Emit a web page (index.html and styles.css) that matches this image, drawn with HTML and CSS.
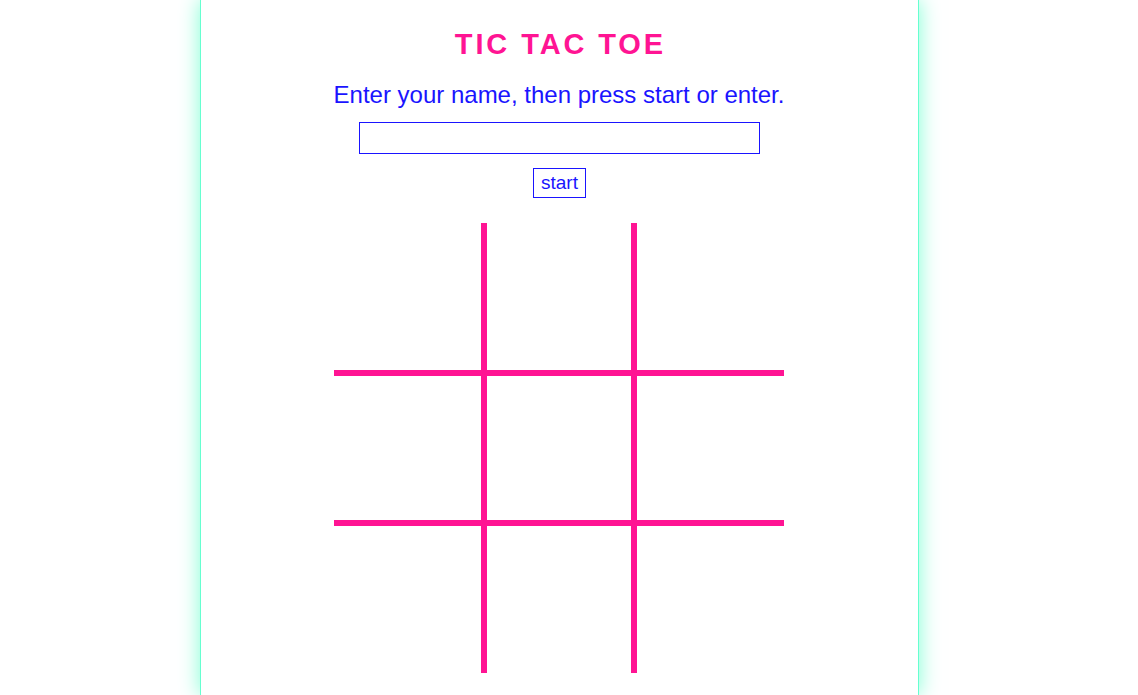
FILE: index.html
```html
<!DOCTYPE html>
<html>
<head>
<meta charset="utf-8">
<link rel="stylesheet" href="styles.css">
<title>Tic Tac Toe</title>
</head>
<body>
<div class="page">
  <main class="container">
    <h1 class="title">TIC TAC TOE</h1>
    <p class="prompt">Enter your name, then press start or enter.</p>
    <input class="name-input" type="text">
    <button class="start-btn">start</button>
    <div class="board">
      <div class="cell c0"></div>
      <div class="cell c1"></div>
      <div class="cell c2"></div>
      <div class="cell c3"></div>
      <div class="cell c4"></div>
      <div class="cell c5"></div>
      <div class="cell c6"></div>
      <div class="cell c7"></div>
      <div class="cell c8"></div>
    </div>
  </main>
</div>
</body>
</html>
```
FILE: styles.css
```css
html, body {
  margin: 0;
  padding: 0;
  background: #ffffff;
  height: 100%;
}
body {
  font-family: "Liberation Sans", Arial, sans-serif;
  overflow: hidden;
}
.page {
  padding-left: 200px;
  height: 100%;
}
.container {
  box-sizing: border-box;
  width: 719px;
  min-height: 100%;
  border-left: 1px solid #66ffd0;
  border-right: 1px solid #66ffd0;
  box-shadow: 0 0 20px #7fffd4;
  background: #ffffff;
  display: flex;
  flex-direction: column;
  align-items: center;
  padding-top: 27px;
  padding-right: 1px;
}
.title {
  margin: 0;
  color: #ff1493;
  font-size: 29px;
  line-height: 34px;
  font-weight: bold;
  letter-spacing: 2.9px;
  padding-left: 2.9px;
}
.prompt {
  margin: 19px 0 0 0;
  color: #1a14ff;
  font-size: 24px;
  line-height: 30px;
}
.name-input {
  box-sizing: border-box;
  margin-top: 12px;
  margin-left: 1px;
  width: 401px;
  height: 32px;
  border: 1px solid #1a14ff;
  outline: none;
  padding: 0 4px;
  font-family: inherit;
  font-size: 18px;
  color: #1a14ff;
  background: #fff;
}
.start-btn {
  box-sizing: border-box;
  margin-top: 14px;
  margin-left: 1px;
  width: 53px;
  height: 30px;
  border: 1px solid #1a14ff;
  background: #fff;
  color: #1a14ff;
  font-family: inherit;
  font-size: 19px;
  padding: 0;
}
.board {
  margin-top: 25px;
  display: grid;
  grid-template-columns: repeat(3, 150px);
  grid-template-rows: repeat(3, 150px);
}
.cell {
  box-sizing: border-box;
  border: 0 solid #ff1493;
}
.c0 { border-right-width: 3px; border-bottom-width: 3px; }
.c1 { border-left-width: 3px; border-right-width: 3px; border-bottom-width: 3px; }
.c2 { border-left-width: 3px; border-bottom-width: 3px; }
.c3 { border-top-width: 3px; border-right-width: 3px; border-bottom-width: 3px; }
.c4 { border-width: 3px; }
.c5 { border-top-width: 3px; border-left-width: 3px; border-bottom-width: 3px; }
.c6 { border-top-width: 3px; border-right-width: 3px; }
.c7 { border-top-width: 3px; border-left-width: 3px; border-right-width: 3px; }
.c8 { border-top-width: 3px; border-left-width: 3px; }
```
